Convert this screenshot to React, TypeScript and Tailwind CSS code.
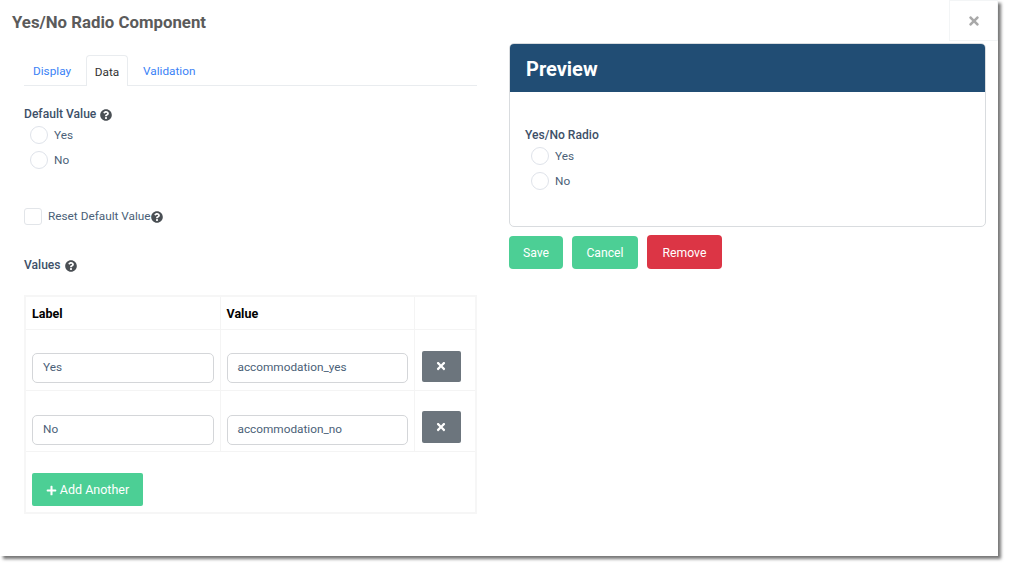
import { FaPlus, FaQuestionCircle, FaTimes } from "react-icons/fa"

function Radio({ label }: { label: string }) {
  return (
    <div className="flex h-[25px] items-center pl-[6px]">
      <span className="h-[18px] w-[18px] rounded-full border border-[#dfe3ea] bg-white" />
      <span className="ml-[6px] pt-[2px] text-[#4b5f78]">{label}</span>
    </div>
  )
}

function Row({ label, value, padClass, btnClass }: { label: string; value: string; padClass: string; btnClass: string }) {
  return (
    <tr className="h-[61px]">
      <td className={`border border-[#f4f4f4] pr-[6px] pl-[6px] align-top ${padClass}`}>
        <div className="flex h-[30px] items-center rounded-[5px] border border-[#d4d6d9] pt-[1px] pl-[10px] text-[#4b5f78]">{label}</div>
      </td>
      <td className={`border border-[#f4f4f4] px-[6px] align-top ${padClass}`}>
        <div className="flex h-[30px] items-center rounded-[5px] border border-[#d4d6d9] pt-[1px] pl-[10px] text-[#4b5f78]">{value}</div>
      </td>
      <td className="border border-[#f4f4f4] px-[7px] align-top">
        <div className={`flex w-[39px] items-center justify-center rounded-[2px] bg-[#6c757d] text-[12px] text-white ${btnClass}`}>
          <FaTimes />
        </div>
      </td>
    </tr>
  )
}

export default function App() {
  return (
    <div className="h-[568px] w-[1010px] overflow-hidden bg-white font-['Roboto',sans-serif] text-[11.8px]">
      <div className="relative h-[556px] w-[998px] bg-white shadow-[3px_3px_3px_#777]">
        <div className="flex h-[43px] items-start justify-between">
          <h1 className="mt-[12px] ml-3 text-[16.8px] leading-[20px] font-bold text-[#5b5b5b]">Yes/No Radio Component</h1>
          <div className="flex h-[41px] w-[49px] items-center justify-center border border-[#f3f5f6] text-[14px] text-[#a9a9a9]">
            <FaTimes />
          </div>
        </div>

        <div className="flex">
          <div className="ml-6 w-[453px]">
            <div className="mt-3 flex h-[31px] border-b border-[#e9ecef]">
              <div className="flex w-[62px] items-center pt-[4px] pl-[9px] text-[#3b82f6]">Display</div>
              <div className="flex h-[31px] w-[42px] items-center justify-center rounded-t-[4px] border border-b-0 border-[#e9ecef] bg-white pt-[4px] text-[#333]">Data</div>
              <div className="flex items-center pt-[4px] pl-[15px] text-[#3b82f6]">Validation</div>
            </div>

            <div className="mt-[19px] flex h-[18px] items-center pt-[1px] text-[12.1px] font-medium text-[#3d5068]">
              Default Value
              <FaQuestionCircle className="ml-[4px] text-[12px] text-[#4a4f54]" />
            </div>
            <div className="-mt-px">
              <Radio label="Yes" />
              <Radio label="No" />
            </div>

            <div className="mt-[36px] flex h-[17px] items-center">
              <span className="h-[17px] w-[18px] rounded-[3px] border border-[#e2e5e9] bg-white" />
              <span className="ml-[6px] pt-[1px] text-[#4b5f78]">Reset Default Value</span>
              <FaQuestionCircle className="text-[12px] text-[#4a4f54]" />
            </div>

            <div className="mt-[31px] flex h-[18px] items-center pt-[1px] text-[12.1px] font-medium text-[#3d5068]">
              Values
              <FaQuestionCircle className="ml-[4px] text-[12px] text-[#4a4f54]" />
            </div>

            <table className="mt-[21px] w-[453px] table-fixed border-collapse border-2 border-[#f6f6f6]">
              <colgroup>
                <col className="w-[195px]" />
                <col className="w-[194px]" />
                <col />
              </colgroup>
              <thead>
                <tr className="h-[33px] text-left text-[12.5px] font-bold text-black">
                  <th className="border border-[#f4f4f4] px-[6px] pt-[3px]">Label</th>
                  <th className="border border-[#f4f4f4] px-[6px] pt-[3px]">Value</th>
                  <th className="border border-[#f4f4f4]" />
                </tr>
              </thead>
              <tbody>
                <Row label="Yes" value="accommodation_yes" padClass="pt-[23px]" btnClass="mt-[21px] h-[31px]" />
                <Row label="No" value="accommodation_no" padClass="pt-[24px]" btnClass="mt-[20px] h-[32px]" />
                <tr className="h-[62px]">
                  <td colSpan={3} className="pt-[16px] pl-[6px]">
                    <div className="flex h-[33px] w-[111px] items-center justify-center rounded-[2px] bg-[#4ccf95] pt-[1px] text-[12.5px] text-white">
                      <FaPlus className="mr-[3px] text-[11px]" />
                      Add Another
                    </div>
                  </td>
                </tr>
              </tbody>
            </table>
          </div>

          <div className="ml-[32px] w-[477px]">
            <div className="h-[184px] overflow-hidden rounded-[5px] border border-[#d9dcdf]">
              <div className="flex h-[48px] items-center bg-[#214d74] pt-[1px] pl-[16px] text-[20px] font-bold text-white">Preview</div>
              <div className="pt-[34px] pl-[15px]">
                <div className="flex h-[18px] items-center text-[12.1px] font-medium text-[#3d5068]">Yes/No Radio</div>
                <div className="-mt-px">
                  <Radio label="Yes" />
                  <Radio label="No" />
                </div>
              </div>
            </div>
            <div className="mt-[8px] flex items-center gap-[9px] text-[12.2px] text-white">
              <div className="flex h-[33px] w-[54px] items-center justify-center rounded-[4px] bg-[#4ccf95] pt-[2px]">Save</div>
              <div className="flex h-[33px] w-[66px] items-center justify-center rounded-[4px] bg-[#4ccf95] pt-[2px]">Cancel</div>
              <div className="flex h-[34px] w-[75px] items-center justify-center rounded-[4px] bg-[#dc3545] pt-[2px]">Remove</div>
            </div>
          </div>
        </div>
      </div>
    </div>
  )
}
